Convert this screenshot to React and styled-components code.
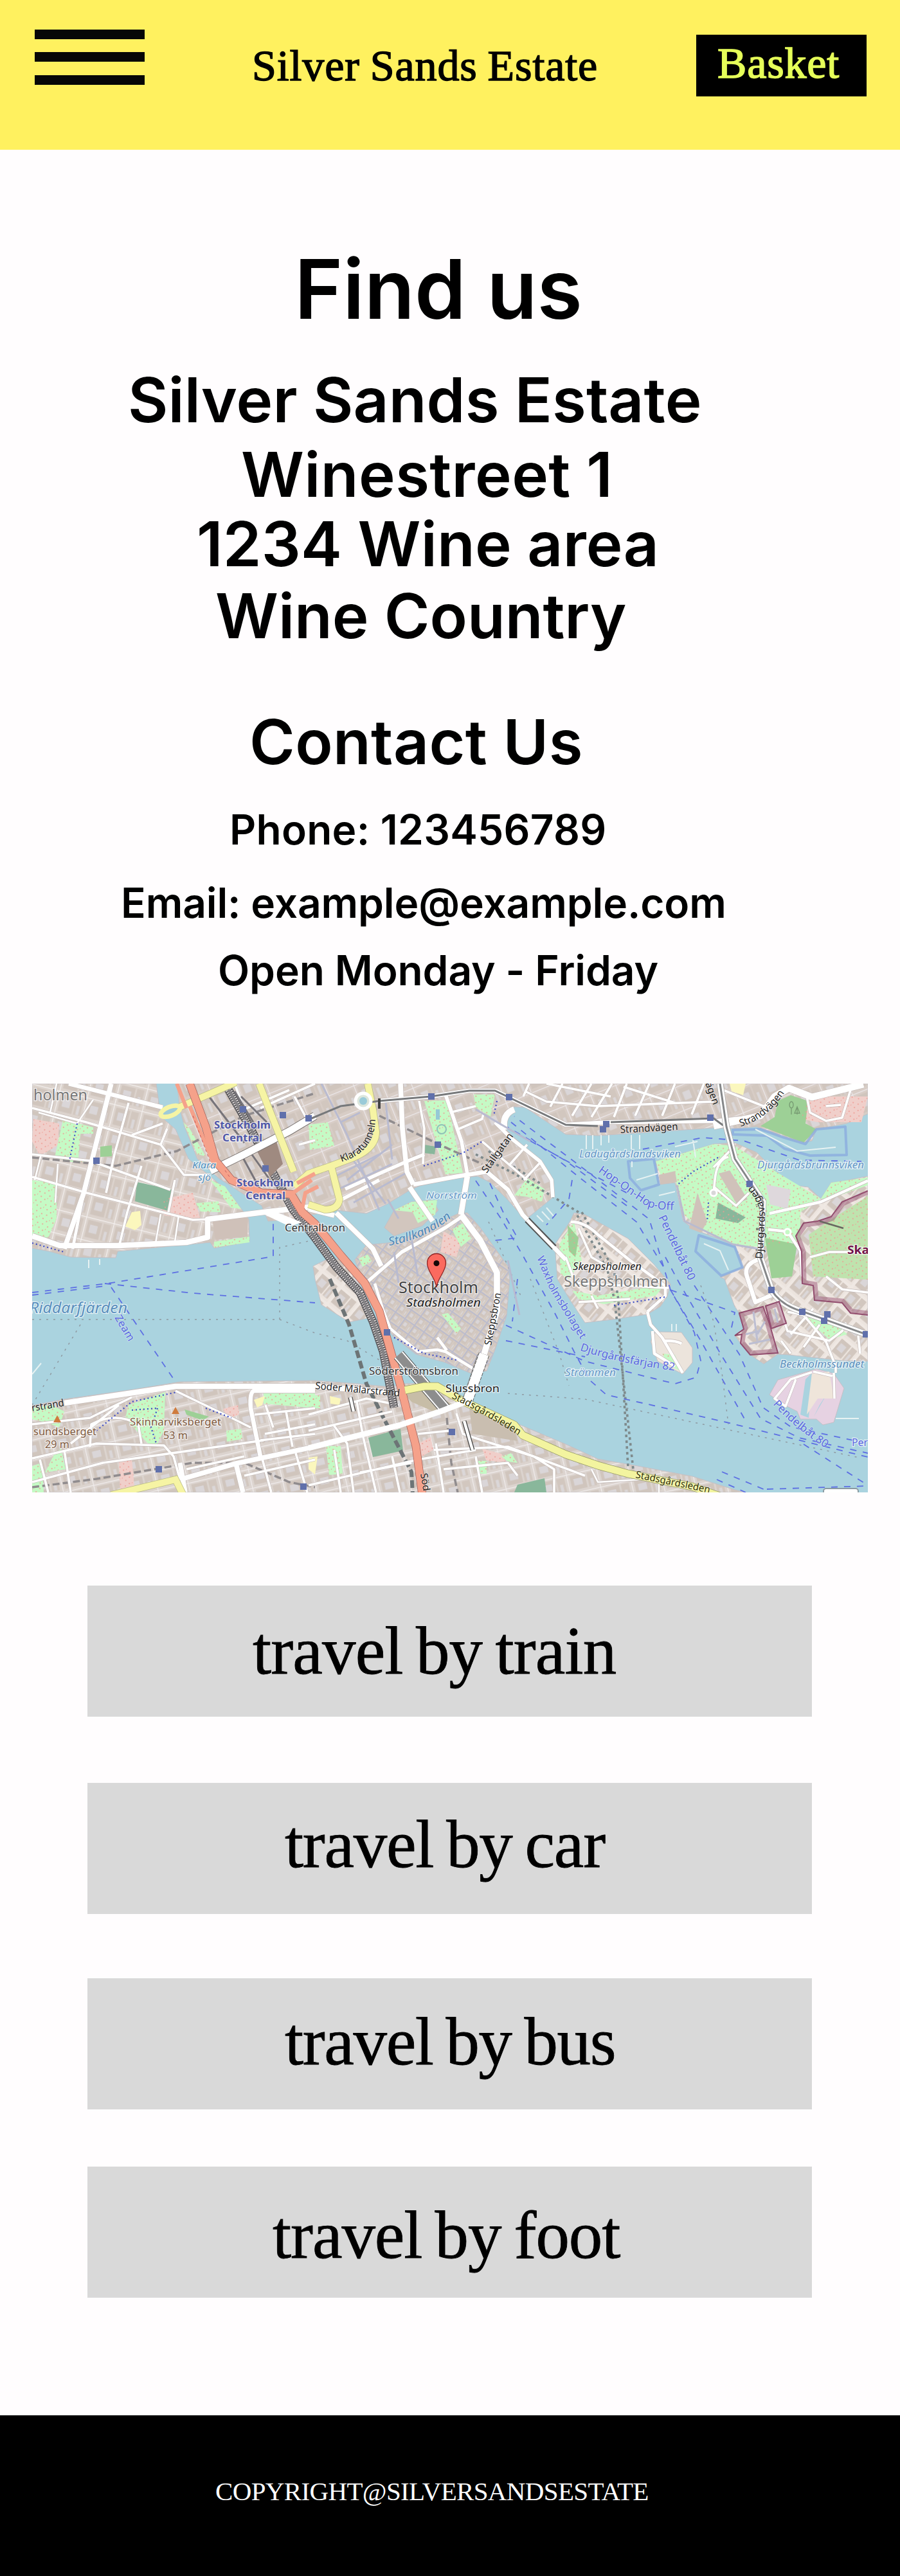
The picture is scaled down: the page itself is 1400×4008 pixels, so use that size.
import React from "react";
import styled, { createGlobalStyle } from "styled-components";

const GlobalStyle = createGlobalStyle`
  * { box-sizing: border-box; }
  body { margin: 0; background: #fffdfe; }
`;

const serif = `"Liberation Serif", "Times New Roman", serif`;

const Page = styled.div`
  width: 1400px;
  height: 4008px;
  display: flex;
  flex-direction: column;
  background: #fffdfe;
  color: #000;
  font-family: Inter, sans-serif;
  overflow: hidden;
`;

const Header = styled.header`
  display: flex;
  align-items: flex-start;
  flex: none;
  height: 233px;
  padding-left: 54px;
  background: #fff15f;
  font-family: ${serif};
`;

const MenuButton = styled.button`
  display: flex;
  flex-direction: column;
  gap: 20px;
  width: 171px;
  margin: 46px 0 0;
  padding: 0;
  border: 0;
  background: none;
`;

const MenuBar = styled.span`
  height: 15px;
  background: #070707;
  &:last-child { margin-top: 1px; }
`;

const Brand = styled.div`
  width: 688px;
  margin-top: 68px;
  margin-left: 167px;
  font-size: 68px;
  line-height: 68px;
  letter-spacing: 0.9px;
  word-spacing: -2px;
  white-space: nowrap;
  -webkit-text-stroke: 1.5px #000;
`;

const BasketButton = styled.button`
  width: 265px;
  height: 96px;
  margin: 54px 0 0 3px;
  padding: 10px 0 0 33px;
  border: 0;
  background: #000;
  color: #e6ff59;
  font: 68px/68px ${serif};
  letter-spacing: 0.8px;
  text-align: left;
  display: flex;
  align-items: flex-start;
  -webkit-text-stroke: 1.5px #e6ff59;
`;

const Info = styled.section`
  display: flex;
  flex-direction: column;
  flex: none;
  height: 1453px;
`;

const Line = styled.p`
  margin: ${(p) => p.$top}px 0 0 ${(p) => p.$left}px;
  font-size: ${(p) => p.$size}px;
  line-height: ${(p) => p.$size}px;
  letter-spacing: ${(p) => p.$spacing}px;
  font-weight: 600;
  white-space: nowrap;
  font-optical-sizing: none;
`;

const MapFrame = styled.div`
  flex: none;
  width: 1300px;
  height: 636px;
  margin-left: 50px;
  svg { display: block; }
`;

const TravelList = styled.nav`
  display: flex;
  flex-direction: column;
  flex: none;
  height: 1436px;
  padding: 145px 0 0 136px;
`;

const TravelCard = styled.a`
  width: 1127px;
  height: 204px;
  margin-bottom: ${(p) => p.$gap}px;
  padding: ${(p) => p.$top}px 0 0 ${(p) => p.$left}px;
  background: #d9d9d9;
  font: 105px/105px ${serif};
  letter-spacing: ${(p) => p.$spacing}px;
  word-spacing: -5px;
  white-space: nowrap;
  -webkit-text-stroke: 0.8px #000;
`;

const Footer = styled.footer`
  flex: none;
  height: 250px;
  padding: 98px 0 0 335px;
  background: #000;
  color: #fff;
  font: 41px/41px ${serif};
  letter-spacing: -0.65px;
`;

const infoLines = [
  { text: "Find us", size: 128, top: 153.4, left: 458, spacing: 0 },
  { text: "Silver Sands Estate", size: 96, top: 60, left: 199, spacing: 0.12 },
  { text: "Winestreet 1", size: 96, top: 20, left: 375, spacing: 0.4 },
  { text: "1234 Wine area", size: 96, top: 12, left: 306, spacing: 0.2 },
  { text: "Wine Country", size: 96, top: 16, left: 335, spacing: 0 },
  { text: "Contact Us", size: 96, top: 100, left: 388, spacing: 0.4 },
  { text: "Phone: 123456789", size: 64, top: 57, left: 357, spacing: 0.25 },
  { text: "Email: example@example.com", size: 64, top: 50, left: 188, spacing: -0.12 },
  { text: "Open Monday - Friday", size: 64, top: 41, left: 339, spacing: -0.1 },
];

const travel = [
  { text: "travel by train", top: 49, left: 257, gap: 103, spacing: -0.9 },
  { text: "travel by car", top: 43, left: 307, gap: 100, spacing: -1.3 },
  { text: "travel by bus", top: 46, left: 307, gap: 89, spacing: -1.4 },
  { text: "travel by foot", top: 54, left: 288, gap: 0, spacing: -1.1 },
];

/* ---------- map data ---------- */

const northShore =
  "357,190 367,214 407,211 430,205 473,197 520,202 553,187 587,166 603,159 663,147 693,144 713,154 740,181 767,212 777,204 810,177 807,144 790,121 750,84 733,67 737,47 750,36 767,37 830,79 880,81 1060,69 1093,70 1127,67 1160,81 1197,92 1213,89 1220,71 1267,62 1300,47 1300,0 225,0 230,40 237,67 257,117 290,147";
const districts = [
  { fill: "url(#blocksA)", pts: "0,256 27,261 60,270 130,271 133,261 277,247 283,256 338,246 337,211 327,197 307,170 277,144 243,117 223,71 200,51 193,0 0,0" },
  { fill: "url(#blocksB)", pts: northShore },
  { fill: "url(#blocksC)", pts: "0,501 50,491 157,476 230,464 440,462 507,467 557,472 577,467 623,466 670,491 750,527 830,561 880,584 937,594 1027,611 1093,632 1110,636 0,636" },
  { fill: "url(#blocksD)", pts: "520,251 563,247 587,237 663,202 677,201 697,224 740,284 743,304 738,361 720,414 707,447 683,451 643,434 597,421 563,394 543,371 530,324 513,304 502,274" },
  { fill: "url(#blocksE)", pts: "437,284 463,271 497,277 527,364 493,371 450,344 440,304" },
  { fill: "#d2c6be", pts: "548,224 563,197 590,184 623,181 632,197 607,221 563,237" },
  { fill: "url(#blocksE)", pts: "970,121 1060,94 1093,92 1127,107 1157,137 1177,157 1207,161 1227,179 1243,154 1260,152 1300,144 1300,432 1260,431 1177,422 1160,421 1138,436 1117,422 1102,404 1093,392 1107,382 1100,357 1093,347 1077,304 1070,301 1105,286 1093,251 1030,227 1013,214 1000,154 975,157" },
  { fill: "url(#blocksE)", pts: "843,201 860,204 927,241 967,281 993,312 988,331 977,347 957,359 903,367 860,372 837,337 817,304 813,251 837,214" },
  { fill: "#ece4dc", pts: "970,386 1010,387 1027,411 1027,434 1012,452 973,432 962,401" },
  { fill: "#e6d2e2", pts: "1147,484 1160,461 1220,444 1247,451 1263,474 1247,527 1230,531 1220,522 1195,522 1190,510 1170,500" },
];

const greens = [
  "48,56 72,62 95,68 95,78 75,78 72,115 85,122 62,122 35,115",
  "0,150 38,155 38,210 25,240 0,235",
  "283,246 338,238 338,247 283,255",
  "235,60 245,70 270,113 257,110",
  "277,150 300,160 325,195 309,193",
  "255,186 290,183 293,200 262,199",
  "430,64 460,60 470,97 432,103",
  "610,27 645,26 670,139 643,141",
  "687,17 720,17 713,51 690,37",
  "750,174 770,147 797,164 793,184 770,176",
  "563,197 590,184 630,181 627,204 600,217 592,200",
  "653,227 670,217 683,241 667,254",
  "637,359 647,357 667,381 660,389",
  "508,272 522,266 528,276 514,285",
  "820,250 843,214 855,275 835,304 822,296",
  "970,121 1060,94 1093,97 1157,137 1227,179 1195,200 1195,245 1140,255 1090,250 1035,222 1015,205 1002,154 978,143",
  "1243,154 1300,146 1300,158 1240,180 1227,179",
  "1200,362 1255,378 1268,390 1240,398",
  "840,322 880,330 985,312 970,330 890,343 850,335",
  "980,420 1000,422 1010,448 990,438",
  "150,500 207,480 205,540 195,560 180,560 145,520",
  "0,505 30,500 50,510 42,535 25,528 0,522",
  "35,575 45,568 52,600 20,605",
  "0,595 15,590 18,636 0,636",
  "360,480 440,480 440,505 360,498",
  "302,540 325,537 327,553 303,557",
  "430,485 448,485 448,505 430,505",
  "457,564 480,564 483,607 462,609",
  "693,587 707,587 707,607 697,607",
  "730,580 745,575 755,590 740,588",
];
const darkGreens = [
  "163,153 218,165 211,198 160,183",
  "523,551 573,537 577,571 530,581",
  "755,624 797,614 800,636 750,636",
  "1067,185 1110,208 1098,217 1063,210",
  "610,95 628,98 626,110 610,108",
];
const forests = [
  "1160,27 1180,18 1207,27 1203,62 1220,71 1200,92 1133,66 1155,52",
  "1140,240 1190,250 1182,300 1150,303",
  "833,220 850,240 845,270 835,260",
  "237,507 275,518 265,524 240,515",
  "106,98 124,96 124,113 106,114",
];
const heath = ["1245,210 1300,175 1300,305 1215,300 1208,235"];
const yellows = [
  "155,200 168,198 170,220 160,228 145,222",
  "1085,0 1110,0 1106,18 1088,12",
  "345,492 362,486 358,500 350,504",
  "430,582 444,580 440,608 430,600",
  "463,486 480,490 478,500 464,498",
];
const pinks = [
  "2,55 42,62 40,96 12,112 0,90",
  "200,180 250,170 262,212 205,205",
  "640,230 668,245 660,270 635,262",
  "1208,20 1300,20 1290,60 1222,60 1196,55",
  "135,586 155,584 160,636 137,636",
  "700,568 730,576 738,590 706,586",
  "600,560 620,550 624,570 606,580",
  "297,506 320,500 322,515 305,522",
];

const whiteRoads = [
  [8, "M123,0 L80,171 L50,257"],
  [5, "M80,171 L63,257"],
  [7, "M57,0 L203,37"],
  [4, "M0,38 L84,60 L200,95 L236,142 L277,142"],
  [9, "M0,237 L43,252 L133,252 L240,247 L273,239 L273,211 L360,200 L440,191"],
  [4, "M0,110 L90,120 L215,165 M0,145 L85,170 L250,212 L273,211"],
  [4, "M150,30 L128,110 L115,170 M170,128 L148,200 L136,250 M222,150 L212,200 M203,62 L155,80 M210,70 L200,95"],
  [3, "M95,25 L70,62 L10,45 M38,0 L28,45 M14,110 L4,150 M40,125 L36,185 M228,205 L222,246 M200,203 L192,248"],
  [10, "M277,134 L330,110 L400,74 L440,52"],
  [4, "M315,0 L330,40 L400,10 M355,38 L440,0 M408,20 L430,60 M415,95 L440,88"],
  [7, "M540,27 L620,20 L680,11 L720,11 L743,22 L830,64 L900,60 L1067,58 L1133,51"],
  [11, "M1060,66 L1133,50 L1155,20 L1177,7 L1213,21 L1293,1"],
  [4, "M1205,20 L1210,45 L1235,58 L1260,53 L1273,10 M1235,35 L1258,33"],
  [4, "M764,20 L773,0 M806,36 L825,0 M840,50 L870,0 M870,52 L902,0 M905,52 L925,0 M938,50 L960,0 M980,50 L1000,0 M1026,48 L1045,0"],
  [4, "M767,12 L800,28 L880,35 L1060,28 M800,0 L900,20 M920,5 L1000,30 M1070,8 L1150,40"],
  [8, "M573,0 L576,70 L583,137 L593,157"],
  [6, "M487,164 L540,140 L583,121 L610,110 M478,182 L540,150"],
  [7, "M593,157 L663,144 L707,137 L740,165 L763,204 L830,274"],
  [6, "M677,141 L668,90 L643,17 M720,60 L745,85 L790,121 L808,150 L810,177"],
  [4, "M602,27 L610,70 L608,125 M660,72 L700,55 L702,47 M650,45 L690,35 M743,126 L770,95 M765,150 L792,121 M700,90 L770,150"],
  [10, "M750,40 Q730,48 735,72"],
  [9, "M677,144 L667,204"],
  [10, "M667,204 L697,244 L723,294 L723,354 L703,421"],
  [14, "M703,421 L677,494"],
  [8, "M677,494 L643,507 L573,531 L430,567 L317,591 L230,616"],
  [8, "M473,201 L530,257 L543,284 M430,195 L470,205"],
  [8, "M587,161 L623,214"],
  [6, "M523,307 L575,262 L643,224 L670,206"],
  [5, "M533,311 L545,350 L557,381 L600,417 L630,414 L643,417 L687,444 M630,395 L645,415"],
  [9, "M50,497 L150,482 L223,471 L440,471 L573,481"],
  [7, "M440,478 L345,478 Q338,480 340,505 L355,580"],
  [4, "M0,530 L90,520 L155,488 M60,560 L110,520 L135,500 M0,583 L100,560 L205,563 L220,580 L230,616"],
  [4, "M90,565 L92,530 Q130,510 165,530 L170,560 M50,570 L60,636 M12,585 L25,636 M0,620 L110,590 L360,555"],
  [4, "M223,478 L310,520 L340,535 M355,555 L440,545 M346,515 L440,505 M362,545 L440,530 M363,500 L375,535 M395,510 L405,565"],
  [8, "M317,591 L328,636 M230,590 L238,636"],
  [4, "M410,575 L428,636 M358,584 L372,636 M240,600 L330,580 M330,610 L440,585"],
  [4, "M430,515 L520,490 L570,500 M430,540 L560,510 M505,495 L515,550 L535,636 M468,530 L490,560 L500,636"],
  [4, "M470,570 L480,636 M430,625 L600,585 L690,570 M560,580 L572,636 M510,605 L590,590 M628,560 L640,636"],
  [4, "M660,513 L670,545 L700,555 L780,580 L812,600 L812,636 M625,570 L740,565 L860,610 M640,600 L740,590 L755,610 M690,580 L700,636 M600,545 L650,540"],
  [3, "M870,600 L880,620 L960,615 M975,620 L975,636"],
  [5, "M838,215 Q860,215 880,235 L930,275 L985,315 L985,330 L957,355"],
  [4, "M850,225 L870,270 L905,290 M830,270 L845,310 L990,318 M870,330 L880,350 M850,340 L930,335"],
  [5, "M957,355 L962,375 L980,395 L1012,450 M965,385 L968,420 L1000,440 M982,400 Q1005,400 1010,405"],
  [4, "M1083,114 Q1065,118 1062,150 L1060,170 M1090,100 L1060,130 M1060,160 L1095,190 L1115,170"],
  [5, "M1147,202 L1227,184 L1300,151 M1145,227 L1175,230 L1195,260 L1198,300"],
  [7, "M1135,272 Q1105,280 1112,300 L1125,340 L1160,325"],
  [4, "M1160,340 L1175,385 L1240,400 L1260,385 L1266,372 M1175,355 L1200,360 L1235,402 L1250,440 L1250,450"],
  [4, "M1180,390 L1215,350 M1200,410 L1225,375 M1165,400 L1180,420 M1285,392 L1288,420"],
  [4, "M1213,449 L1180,460 L1155,490 L1172,502 L1188,460 M1247,450 L1248,490 M1245,455 L1215,448"],
  [4, "M1235,300 L1260,320 L1300,325 M1210,270 L1240,262 L1300,262"],
];

const ferries = [
  "M0,325 L117,311 L375,269 L375,210",
  "M0,329 L113,315",
  "M113,311 L250,326 L440,341",
  "M123,317 L223,464",
  "M690,151 L730,211 L763,267 L813,357 L843,417 L867,461 L893,484 L1080,527 L1300,581",
  "M737,376 L860,432 L1000,467 L1033,457 L1040,431 L1030,387 L993,321 L960,211 L860,134 L750,51",
  "M737,400 L860,425",
  "M745,60 L850,145 L940,215 L985,290",
  "M740,70 L840,125 L925,170",
  "M733,64 L830,120 L925,190",
  "M985,270 L1007,311 L1073,424 L1133,521 L1193,551 L1300,575",
  "M993,321 L1040,400 L1110,525",
  "M1030,314 L1100,421 L1137,504 L1180,534 L1300,560",
  "M993,321 L1093,356 L1087,384",
  "M1143,631 L1300,626",
  "M1073,604 L1140,632",
  "M1065,616 L1110,636",
  "M1200,561 L1300,625",
  "M950,102 L1043,84 L1107,89 L1193,119 L1290,121",
  "M712,155 L735,205 L755,240 L720,244",
  "M755,304 L747,370",
  "M840,150 L835,180 L800,220",
];

const stations = [
  [328, 40], [390, 49], [430, 54], [100, 120], [363, 132], [621, 20], [742, 21], [631, 95],
  [1055, 53], [1116, 156], [893, 63], [888, 71], [197, 600], [422, 627], [552, 387], [653, 542],
  [1150, 321], [1198, 355], [1232, 369], [1237, 359], [1297, 390],
];

const straightLabels = [
  { t: "holmen", x: 2, y: 26, w: 84, s: 23, c: "#777777" },
  { t: "Stockholm", x: 283, y: 70, w: 88, s: 16.5, c: "#5058a8", b: 700 },
  { t: "Central", x: 296, y: 90, w: 62, s: 16.5, c: "#5058a8", b: 700 },
  { t: "Stockholm", x: 318, y: 160, w: 89, s: 16.5, c: "#5058a8", b: 700 },
  { t: "Central", x: 332, y: 180, w: 62, s: 16.5, c: "#5058a8", b: 700 },
  { t: "Klara", x: 249, y: 132, w: 37, s: 15, c: "#4f8fc0", i: 1 },
  { t: "sjö", x: 258, y: 151, w: 20, s: 15, c: "#4f8fc0", i: 1 },
  { t: "Centralbron", x: 393, y: 230, w: 94, s: 16, c: "#333333" },
  { t: "Norrström", x: 613, y: 179, w: 79, s: 15, c: "#6698c8", i: 1 },
  { t: "Ladugårdslandsviken", x: 851, y: 115, w: 158, s: 15.5, c: "#6698c8", i: 1 },
  { t: "Djurgårdsbrunnsviken", x: 1128, y: 132, w: 166, s: 15.5, c: "#6698c8", i: 1 },
  { t: "Ska", x: 1268, y: 265, w: 34, s: 18, c: "#701249", b: 700 },
  { t: "Skeppsholmen", x: 841, y: 290, w: 107, s: 16, c: "#222222", i: 1 },
  { t: "Skeppsholmen", x: 827, y: 316, w: 162, s: 23, c: "#777777" },
  { t: "Riddarfjärden", x: -4, y: 357, w: 152, s: 23, c: "#5a8fbd", i: 1 },
  { t: "Strömmen", x: 829, y: 455, w: 79, s: 15.5, c: "#6698c8", i: 1 },
  { t: "Stockholm", x: 570, y: 326, w: 124, s: 25, c: "#444444" },
  { t: "Stadsholmen", x: 582, y: 347, w: 116, s: 18, c: "#222222", i: 1 },
  { t: "Söderströmsbron", x: 524, y: 453, w: 139, s: 16, c: "#333333" },
  { t: "Slussbron", x: 643, y: 480, w: 84, s: 16.5, c: "#222222" },
  { t: "sundsberget", x: 2, y: 547, w: 98, s: 16, c: "#805a40" },
  { t: "29 m", x: 20, y: 567, w: 38, s: 16, c: "#805a40" },
  { t: "Skinnarviksberget", x: 152, y: 532, w: 142, s: 16, c: "#805a40" },
  { t: "53 m", x: 204, y: 553, w: 38, s: 16, c: "#805a40" },
  { t: "Beckholmssundet", x: 1163, y: 442, w: 131, s: 15.5, c: "#5a8fbd", i: 1 },
  { t: "Per", x: 1275, y: 564, w: 25, s: 16, c: "#5a68e0" },
];

const curvedLabels = [
  { t: "Klaratunneln", d: "M481,122 Q533,107 534,54", s: 15.5, w: 92, c: "#222222" },
  { t: "Stallkanalen", d: "M555,252 Q615,242 655,206", s: 18, w: 108, c: "#4f88b8", i: 1 },
  { t: "Stallgatan", d: "M707,140 L750,80", s: 15.5, w: 72, c: "#222222" },
  { t: "Strandvägen", d: "M915,77 L1006,72", s: 16, w: 90, c: "#222222" },
  { t: "Strandvägen", d: "M1102,67 Q1145,55 1173,10", s: 15.5, w: 88, c: "#222222" },
  { t: "ägen", d: "M1047,0 L1061,38", s: 15.5, w: 36, c: "#222222" },
  { t: "Hop-On-Hop-Off", d: "M880,137 L955,190 Q965,196 1003,197", s: 17.5, w: 136, c: "#5a68e0" },
  { t: "Pendelbåt 80", d: "M974,208 L1025,314", s: 17.5, w: 110, c: "#5a68e0" },
  { t: "Djurgårdsvägen", d: "M1136,273 L1140,205 Q1140,180 1116,155", s: 15.5, w: 120, c: "#222222" },
  { t: "Zeam", d: "M128,364 L154,408", s: 16.5, w: 44, c: "#5a68e0" },
  { t: "Waxholmsbolaget", d: "M785,271 L805,320 L855,401", s: 16.5, w: 145, c: "#5a68e0" },
  { t: "Djurgårdsfärjan 82", d: "M852,415 Q915,436 1002,447", s: 17, w: 151, c: "#5a68e0" },
  { t: "Skeppsbron", d: "M714,408 L730,324", s: 15.5, w: 83, c: "#222222" },
  { t: "Söder Mälarstrand", d: "M440,475 L574,487", s: 15.5, w: 132, c: "#222222" },
  { t: "Stadsgårdsleden", d: "M652,489 Q705,515 759,549", s: 15.5, w: 120, c: "#333300" },
  { t: "Stadsgårdsleden", d: "M938,613 L1058,638", s: 15.5, w: 118, c: "#333300" },
  { t: "rstrand", d: "M0,510 L54,501", s: 15.5, w: 51, c: "#222222" },
  { t: "Pendelbåt 80", d: "M1152,499 Q1185,535 1237,569", s: 17, w: 107, c: "#5a68e0" },
  { t: "Söd", d: "M604,607 L616,680", s: 15.5, w: 28, c: "#222222" },
];

function BlockPattern({ id, w, h, angle, road, line, base }) {
  return (
    <pattern id={id} width={w} height={h} patternUnits="userSpaceOnUse" patternTransform={`rotate(${angle})`}>
      <rect width={w} height={h} fill={base} />
      <rect x={w * 0.1} y={h * 0.12} width={w * 0.5} height={h * 0.75} fill="#d0c5bd" />
      <rect x={w * 0.2} y={h * 0.3} width={w * 0.28} height={h * 0.35} fill="#dad6d8" />
      <rect x={w * 0.66} y={h * 0.12} width={w * 0.26} height={h * 0.75} fill="#d2c7bf" />
      <rect x={w * 0.74} y={h * 0.45} width={w * 0.1} height={h * 0.4} fill="#dbd7d8" />
      <path d={`M0,0H${w}M0,0V${h}`} stroke={road} strokeWidth={line} />
    </pattern>
  );
}

const Poly = ({ list, fill }) => list.map((pts) => <polygon key={pts} points={pts} fill={fill} />);

function CityMap() {
  const motorway =
    "M245,0 L270,67 L285,120 L310,150 L357,170 L403,172 L420,200 L440,218 L480,267 L517,310 L540,354 L557,414 L573,470 L583,510 L597,564 L607,640";
  const shoreRoad =
    "M580,477 L610,471 L630,471 L670,494 L750,531 L763,547 L830,577 L880,594 L927,607 L1027,627 L1070,642";
  const yellowRoads =
    "M317,-2 L210,45 M353,0 L407,137 M407,160 L430,140 L465,128 L478,180 Q476,196 455,196 L430,188 M465,128 L500,115 Q535,100 535,75 L530,40 L522,0 M123,640 L223,616 L235,640";
  const tram = "M1070,0 L1080,67 L1093,117 L1137,184 L1133,271 L1150,321 Q1165,345 1197,354 L1300,391";
  const rail = "M300,0 L340,70 L370,130 L405,195 L437,236 L473,285 L510,325 L530,370 L546,417 L563,504";
  return (
    <svg width="1300" height="636" viewBox="0 0 1300 636" fontFamily='"Noto Sans", "Open Sans", sans-serif'>
      <defs>
        <BlockPattern id="blocksA" w={44} h={36} angle={14} road="#f3efee" line={2.5} base="#dcd3cd" />
        <BlockPattern id="blocksB" w={42} h={38} angle={-22} road="#ece8ea" line={2.5} base="#d8cdc6" />
        <BlockPattern id="blocksC" w={48} h={30} angle={-13} road="#f0ecec" line={2.5} base="#dcd4cf" />
        <BlockPattern id="blocksD" w={18} h={17} angle={35} road="#bcbccc" line={4} base="#d8cec6" />
        <BlockPattern id="blocksE" w={38} h={34} angle={40} road="#efe8e3" line={8} base="#ece4de" />
        <pattern id="paths" width="17" height="15" patternUnits="userSpaceOnUse" patternTransform="rotate(25)">
          <path d="M1,3h2M8,5h2M4,11h2M13,12h2M12,2h1" stroke="#ef9a92" strokeWidth="1.3" />
        </pattern>
        <clipPath id="frame"><rect width="1300" height="636" /></clipPath>
      </defs>
      <g clipPath="url(#frame)">
        <rect width="1300" height="636" fill="#aad3df" />
        {districts.map((d) => (
          <polygon key={d.pts} points={d.pts} fill={d.fill} stroke="#c3c0c6" strokeWidth="1" />
        ))}
        <Poly list={pinks} fill="#f0cfca" />
        <Poly list={greens} fill="#c5fac5" />
        <Poly list={heath} fill="#bfe3ae" />
        <Poly list={forests} fill="#9dd096" />
        <Poly list={darkGreens} fill="#89b79b" />
        <Poly list={yellows} fill="#fbf7bd" />
        <Poly list={greens} fill="url(#paths)" />
        <Poly list={heath} fill="url(#paths)" />
        <Poly list={pinks} fill="url(#paths)" />
        <polygon points="1022,225 1035,170 1050,215 1040,232" fill="#d0c2ba" />
        <polygon points="1068,140 1085,135 1113,180 1096,187" fill="#d0c2ba" />
        <polygon points="975,142 1000,136 1003,153 977,157" fill="#d0c2ba" />
        <polygon points="1142,157 1180,165 1175,195 1148,188" fill="#ded8dc" />
        <polygon points="577,480 615,475 655,500 635,515 590,495" fill="#c7bda7" />
        <polygon points="680,505 750,537 755,556 685,545" fill="#c9beb0" />
        <polygon points="280,210 335,200 335,238 285,243" fill="#cfc1b9" />
        <polygon points="1195,515 1203,460 1213,450 1208,520" fill="#aad3df" />
        <polygon points="1225,500 1238,480 1216,518" fill="#aad3df" />
        <polygon points="1213,451 1240,448 1247,490 1222,490 1205,515" fill="#efe5da" />

        <g fill="none" stroke="#8badde" strokeWidth="4" strokeOpacity="0.8" strokeLinejoin="round">
          <polygon points="927,121 967,117 975,157 947,166 930,147" />
          <polygon points="1090,72 1133,71 1170,84 1203,94 1220,71 1265,67 1267,111 1210,112 1170,101 1143,81 1090,79" />
          <polygon points="1037,236 1093,254 1105,286 1072,299 1032,261" />
        </g>
        <g fill="none" stroke="#e7f2f2" strokeWidth="2">
          <path d="M1125,71 L1190,105 L1250,99 M933,130 V121 M940,150 L973,140 M975,174 L1000,168 M1045,249 L1070,260 L1083,290 M862,80 V102 M872,80 V102 M885,80 V96 M897,80 V92 M932,80 V102 M945,80 V102 M1000,98 L1035,90 M1028,88 L1032,115 M785,205 L795,215 M793,199 L805,212 M800,193 L812,207 M995,374 V385 M1002,374 V385 M1250,521 H1286 M0,452 L14,435 M88,274 V287 M105,273 V282" />
        </g>

        <g fill="none" stroke="#8f9aa2" strokeWidth="1.5" strokeDasharray="3 8">
          <path d="M0,367 H385 V255 L430,245 M385,367 L440,388 L490,400 L540,430 M75,375 L0,500 M860,491 L1287,582 M740,482 L860,491 M775,304 L820,420 L835,470 M710,215 L760,330 M1040,314 L1060,370 L1073,450 L1083,530" />
        </g>
        <g fill="none" stroke="#7e8a8c" strokeWidth="3.6" strokeDasharray="4 5">
          <path d="M855,200 L905,290 L912,337 L927,597 M848,205 L895,290 L906,337 L935,600 M690,110 L750,140 L850,200 M710,105 L790,155" />
        </g>
        <g fill="none" stroke="#5d6fe3" strokeWidth="1.8" strokeDasharray="10 10">
          {ferries.map((d) => <path key={d} d={d} />)}
        </g>

        <g fill="none" stroke="#908c8e" strokeWidth="3.5" strokeDasharray="11 5">
          <path d="M0,115 L130,128 L225,105 L330,50 L440,15 M0,628 L100,615 L250,590 L330,590 L400,620 L440,628 M540,50 L640,98 L700,125 M645,520 L652,590 L662,636" />
        </g>
        <path d="M463,304 L493,375 L520,467 L547,521 L590,604 L592,640" fill="none" stroke="#6d7476" strokeWidth="6" strokeDasharray="12 5" />

        <g fill="none" strokeLinejoin="round">
          {whiteRoads.map(([w, d]) => <path key={d} d={d} stroke="#c2b8b6" strokeWidth={w + 0.8} />)}
          {whiteRoads.map(([w, d]) => <path key={d} d={d} stroke="#fff" strokeWidth={w - 0.4} />)}
        </g>
        <g fill="none" stroke="#b9bbd0" strokeWidth="3">
          <path d="M450,0 L490,80 L540,197 M480,60 L510,45 M475,165 L560,125 M500,185 L580,140 M550,30 L560,118 M490,150 L560,95 M470,145 L540,110 M553,180 L570,210 M500,120 L550,187 M563,262 L570,310 M590,240 L600,300 M740,275 L758,360 M775,90 L720,58 L690,40 M1135,258 L1090,250 L1015,214 L1003,158" />
        </g>
        <g fill="none" stroke="#3d4cc6" strokeWidth="2.2" strokeDasharray="2 4">
          <path d="M70,62 L58,120 M100,540 L155,495 L225,480 M155,508 L195,505 M195,505 L185,535 L193,560 M609,128 L670,108 L700,90 M723,27 L718,50 M1067,115 L1028,137 L1003,158 M1052,185 L1050,215 M905,345 L985,332 M0,248 L50,262 M270,505 L310,520 M563,395 L610,420 L660,430" />
        </g>

        <g fill="none">
          <path d={rail} stroke="#5b5a5d" strokeWidth="13" />
          <path d={rail} stroke="#e5dfdf" strokeWidth="10" strokeDasharray="1.5 2" />
          <path d={rail} stroke="#858386" strokeWidth="4" />
          <path d="M275,20 L330,92 M315,12 L350,70 M325,20 L365,60 M325,110 L355,165 M338,105 L370,150" stroke="#77747a" strokeWidth="3" />
          <path d="M350,105 L380,90 L390,125 L370,145 Z" fill="#9f8a80" />
          <path d="M277,136 L330,110 L400,74 L440,50" stroke="#77706d" strokeWidth="13" />
          <path d="M277,136 L330,110 L400,74 L440,50" stroke="#fff" strokeWidth="11" />
          <path d={yellowRoads} stroke="#b9bb86" strokeWidth="11.5" />
          <path d={yellowRoads} stroke="#f6f4a4" strokeWidth="10" />
          <ellipse cx="215" cy="43" rx="16" ry="7" stroke="#f6f4a4" strokeWidth="7" fill="#9fcbd8" transform="rotate(-22 215 43)" />
          <path d={motorway} stroke="#a4625c" strokeWidth="13" />
          <path d={motorway} stroke="#f5a18a" strokeWidth="11.5" />
          <path d="M225,0 L240,38 M245,35 L285,130 M310,150 L330,158 M403,172 L435,150 M440,140 L412,155 M420,195 L425,170 L445,160" stroke="#f5a18a" strokeWidth="6" />
          <path d="M250,50 L280,130 M300,135 L307,145" stroke="#c85c5c" strokeWidth="1" strokeDasharray="4 4" />
          <path d="M362,204 L380,200 L420,216 L400,222 Z" fill="#fff" />
          <path d="M570,422 L643,507" stroke="#555" strokeWidth="19" />
          <path d="M570,422 L643,507" stroke="#fff" strokeWidth="17" />
          <path d="M570,422 L643,507" stroke="#8d8d8d" strokeWidth="13" />
          <path d={shoreRoad} stroke="#969b67" strokeWidth="12.5" />
          <path d={shoreRoad} stroke="#f3f49f" strokeWidth="11" />
          <path d="M677,494 L638,509 L573,531 L430,567" stroke="#fff" strokeWidth="9" />
          <path d="M703,421 L677,494" stroke="#555" strokeWidth="17" strokeDasharray="5 2" />
          <path d="M703,421 L675,500" stroke="#fff" strokeWidth="15" />
          <path d="M693,421 L670,490" stroke="#888" strokeWidth="1" />
          <path d="M672,525 L685,570 M495,488 L500,510" stroke="#444" strokeWidth="7" />
          <path d="M672,525 L685,570 M495,488 L500,510" stroke="#fff" strokeWidth="4.5" />
          <path d="M430,56 L480,35 L540,27 L620,20 L680,11 L720,11 L743,22 L830,64 L880,66 M900,60 L1060,54 L1075,65" stroke="#77797b" strokeWidth="3" />
          <circle cx="515" cy="27" r="12" fill="#dce6dc" stroke="#fff" strokeWidth="5" />
          <circle cx="515" cy="27" r="6" fill="#9acbd8" />
          <path d="M540,23 L540,39" stroke="#444" strokeWidth="4" />
          <path d="M770,212 L812,255" stroke="#555" strokeWidth="10" />
          <path d="M770,212 L830,274" stroke="#fff" strokeWidth="6" />
          <path d={tram} stroke="#aaa" strokeWidth="10.5" />
          <path d={tram} stroke="#fff" strokeWidth="9" />
          <path d={tram} stroke="#858789" strokeWidth="3" />
        </g>
        <g fill="none" stroke="#8c4668" strokeWidth="2">
          <path d="M1300,167 L1260,184 L1243,207 L1222,214 L1200,217 L1188,237 L1197,261 L1198,311 L1215,314 L1217,337 L1260,341 L1273,357 L1300,360" />
          <polygon points="1100,357 1137,347 1147,374 1160,419 1117,422 1102,404 1104,390 1093,392 1107,382" />
          <polygon points="1141,346 1162,339 1173,373 1150,381" />
        </g>
        <g fill="none" stroke="#9c5878" strokeWidth="7" strokeOpacity="0.5">
          <path d="M1300,169 L1261,187 L1245,210 L1223,217 L1203,220 L1191,237 L1200,261 L1201,309 L1218,312 L1220,334 L1261,338 L1275,354 L1300,357" />
          <polygon points="1103,360 1135,350 1144,374 1156,416 1118,419 1105,402 1107,388 1110,380" />
          <polygon points="1144,349 1160,343 1169,370 1152,377" />
        </g>
        <path d="M1225,214 L1262,225" stroke="#686760" strokeWidth="2.5" />
        <g fill="none" stroke="#bcbed2" strokeWidth="3">
          <path d="M1122,355 L1128,400 M1115,405 L1148,398 M1110,390 L1130,385 M1155,350 L1160,372 M1128,390 L1140,370" />
        </g>
        <circle cx="1060" cy="170" r="5" fill="#d8d6d8" stroke="#fff" strokeWidth="3" />
        <circle cx="1175" cy="231" r="5" fill="#c5fac5" stroke="#fff" strokeWidth="3" />
        <circle cx="637" cy="71" r="7" fill="none" stroke="#8ec2b8" strokeWidth="2" />
        <path d="M628,40 h6 v16 h-6z" fill="#95c9d6" />
        <path d="M1181,38 v10 M1181,38 a3,5 0 1 1 .1,0 M1190,38 v10 M1186,46 l4,-10 l4,10z" fill="none" stroke="#779b72" strokeWidth="1.3" />

        {stations.map(([x, y]) => (
          <rect key={`${x}-${y}`} x={x - 5} y={y - 5} width="10" height="10" fill="#6070ab" />
        ))}
        <path d="M39,516 l6,11 h-12z M223,503 l6,11 h-12z" fill="#cf7b3d" />

        {straightLabels.map((l) => (
          <text
            key={`${l.t}-${l.x}-${l.y}`}
            x={l.x}
            y={l.y}
            textLength={l.w}
            lengthAdjust="spacingAndGlyphs"
            fontSize={l.s}
            fontWeight={l.b || 400}
            fontStyle={l.i ? "italic" : "normal"}
            fill={l.c}
            stroke="#fff"
            strokeOpacity="0.7"
            strokeWidth="2.4"
            paintOrder="stroke"
          >
            {l.t}
          </text>
        ))}
        {curvedLabels.map((l, i) => (
          <g key={l.t + l.d}>
            <path id={`label-${i}`} d={l.d} fill="none" />
            <text
              fontSize={l.s}
              fontStyle={l.i ? "italic" : "normal"}
              fill={l.c}
              stroke="#fff"
              strokeOpacity="0.4"
              strokeWidth="1.6"
              paintOrder="stroke"
            >
              <textPath href={`#label-${i}`} textLength={l.w} lengthAdjust="spacingAndGlyphs">{l.t}</textPath>
            </text>
          </g>
        ))}

        <path d="M629,317 C627,301 614.500,293 614.500,279 A14.500,14.500 0 0 1 643.500,279 C643.500,293 631,301 629,317Z" fill="#fb6a5f" stroke="#8d2524" strokeWidth="1.3" />
        <circle cx="629" cy="279.500" r="4.500" fill="#160808" />
        <rect x="1231" y="630" width="54" height="20" rx="4" fill="#fff" stroke="#8b9ba2" strokeWidth="2" />
      </g>
    </svg>
  );
}

export default function App() {
  return (
    <Page>
      <GlobalStyle />
      <Header>
        <MenuButton aria-label="Menu">
          <MenuBar />
          <MenuBar />
          <MenuBar />
        </MenuButton>
        <Brand>Silver Sands Estate</Brand>
        <BasketButton>Basket</BasketButton>
      </Header>
      <Info>
        {infoLines.map((l) => (
          <Line key={l.text} $size={l.size} $top={l.top} $left={l.left} $spacing={l.spacing}>{l.text}</Line>
        ))}
      </Info>
      <MapFrame>
        <CityMap />
      </MapFrame>
      <TravelList>
        {travel.map((t) => (
          <TravelCard key={t.text} $top={t.top} $left={t.left} $gap={t.gap} $spacing={t.spacing}>{t.text}</TravelCard>
        ))}
      </TravelList>
      <Footer>COPYRIGHT@SILVERSANDSESTATE</Footer>
    </Page>
  );
}
